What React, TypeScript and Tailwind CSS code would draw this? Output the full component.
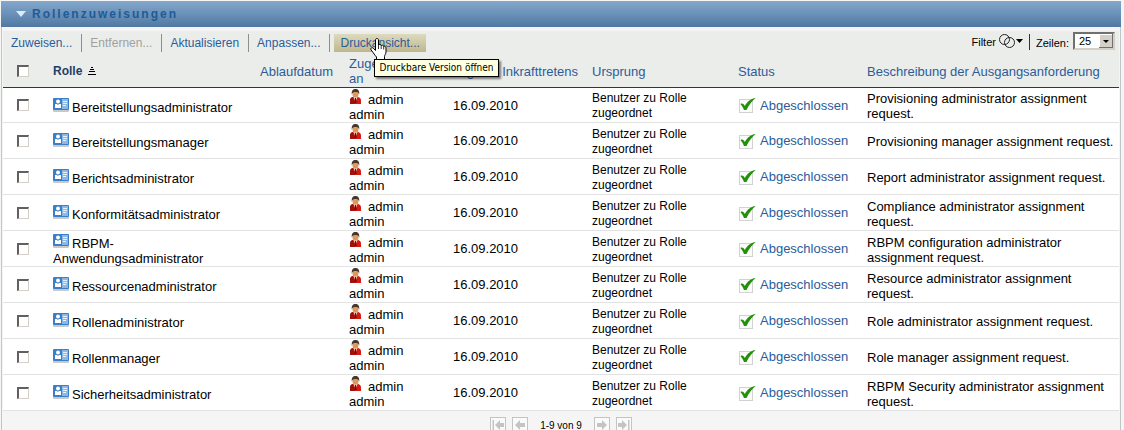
import { useState } from 'react'

const roles = [
  { name: 'Bereitstellungsadministrator', description: 'Provisioning administrator assignment request.' },
  { name: 'Bereitstellungsmanager', description: 'Provisioning manager assignment request.' },
  { name: 'Berichtsadministrator', description: 'Report administrator assignment request.' },
  { name: 'Konformitätsadministrator', description: 'Compliance administrator assignment request.' },
  { name: 'RBPM-Anwendungsadministrator', description: 'RBPM configuration administrator assignment request.' },
  { name: 'Ressourcenadministrator', description: 'Resource administrator assignment request.' },
  { name: 'Rollenadministrator', description: 'Role administrator assignment request.' },
  { name: 'Rollenmanager', description: 'Role manager assignment request.' },
  { name: 'Sicherheitsadministrator', description: 'RBPM Security administrator assignment request.' },
]

function RoleIcon() {
  return (
    <svg className="mr-[3px] inline-block h-3.5 w-4 align-baseline" viewBox="0 0 16 14" aria-hidden="true">
      <rect y="1" width="16" height="13" rx="1" fill="#c9c9c9" />
      <rect width="16" height="12" rx="1" fill="#3b7fc9" />
      <rect x="9" y="1" width="6" height="10" fill="#8db8e4" />
      <circle cx="5" cy="3.500" r="2" fill="#fff" />
      <path d="M2 6h2l1 1 1-1h2v4H2z" fill="#fff" />
      <path d="M10 3.500h4M10 5.500h4M10 7.500h3" stroke="#e8f2fc" />
    </svg>
  )
}

function UserIcon() {
  return (
    <svg className="mr-1.5 inline-block h-[15px] w-[13px] align-baseline" viewBox="0 0 13 15" aria-hidden="true">
      <path d="M1 15v-3.500C1 9.500 2.500 8 4.500 8h4c2 0 3.500 1.500 3.500 3.500V15z" fill="#d41a12" />
      <path d="M1 15v-3.500C1 9.500 2.500 8 4 8l2 7z" fill="#9c120c" />
      <path d="M4.500 8h4l-2 5z" fill="#fbe9e2" />
      <path d="M6 9h1l.5 5h-2z" fill="#6d0805" />
      <ellipse cx="6.500" cy="5.500" rx="3" ry="3.300" fill="#dd9a5e" />
      <path d="M2.800 5.500C2.300 1.800 4 0 6.500 0s4.200 1.800 3.700 5.500C9.500 3.300 8.500 3 6.500 3s-3 .3-3.700 2.500z" fill="#47352a" />
    </svg>
  )
}

function CheckIcon() {
  return (
    <svg className="h-4 w-[18px] shrink-0" viewBox="0 0 18 16" aria-hidden="true">
      <rect x="1.500" y="2.500" width="13" height="13" fill="#fbfbfb" stroke="#d2d2d2" />
      <path d="M2.500 7c2-1 3.300 0 4.300 2C9 5 12.500 1.500 17.500 1 13.500 4.500 10.500 8.500 8.500 13H6C5 10.500 4 9 2.500 7z" fill="#23900a" />
    </svg>
  )
}

function FilterIcon() {
  return (
    <svg className="h-4 w-6" viewBox="0 0 24 16" fill="none" aria-hidden="true">
      <circle cx="5.500" cy="5.500" r="5" stroke="#222" />
      <circle cx="10.500" cy="8.500" r="5" stroke="#222" />
      <path d="M17 5h7l-3.500 4z" fill="#000" />
    </svg>
  )
}

function Checkbox({ label }: { label: string }) {
  return (
    <input
      type="checkbox"
      aria-label={label}
      className="ml-3.5 block size-3 appearance-none border border-t-2 border-l-2 border-t-[#606060] border-r-[#d4d0c8] border-b-[#d4d0c8] border-l-[#606060] bg-white checked:bg-[#2b5c9a]"
    />
  )
}

function PagerButton({ label, back, edge }: { label: string; back?: boolean; edge?: boolean }) {
  return (
    <button type="button" aria-label={label} className="block">
      <svg className={back ? 'size-4 -scale-x-100' : 'size-4'} viewBox="0 0 16 16" aria-hidden="true">
        <rect x=".5" y=".5" width="15" height="15" fill="#fafafa" stroke="#c4c4c4" />
        <path d={edge ? 'M2 6h4V3l5 5-5 5v-3H2z' : 'M3 6h5V3l5 5-5 5v-3H3z'} fill="#c4c4c4" />
        {edge && <path d="M12 3h1.500v10H12z" fill="#c4c4c4" />}
      </svg>
    </button>
  )
}

const toolClass = 'h-[18px] border-r border-[#8e8e8e] pr-[9px] mr-2'
const headClass = 'font-normal text-left align-middle'

export default function App() {
  const [rows, setRows] = useState('25')

  return (
    <div className="bg-[#f5f5f5] pt-px pr-[3px] pl-px font-['Liberation_Sans',Arial,sans-serif] text-[13px] leading-[15px] text-black">
      {/* Title bar */}
      <header className="flex h-[26px] items-center gap-1.5 bg-linear-to-b from-[#84a8cc] to-[#5079a3] pl-[15px]">
        <svg className="h-1.5 w-2.5" viewBox="0 0 10 6" aria-hidden="true">
          <path d="M0 0h10L5 6z" fill="#d8ecfb" />
        </svg>
        <h1 className="text-xs font-bold tracking-[2px] text-[#1f5a99]">Rollenzuweisungen</h1>
      </header>

      <main className="border-x border-[#c3c6c9] px-px pt-1">
        {/* Toolbar */}
        <div className="flex h-6 items-center justify-between bg-[#ebedeb] pr-1 pl-2">
          <div className="flex items-center text-xs leading-[18px] text-[#2b5c9a]">
            <button type="button" className={toolClass}>Zuweisen...</button>
            <button type="button" disabled className={`${toolClass} text-[#a0a0a0]`}>Entfernen...</button>
            <button type="button" className={toolClass}>Aktualisieren</button>
            <button type="button" className="mr-1 h-[18px] border-r border-[#8e8e8e] pr-[9px]">Anpassen...</button>
            <div className="relative">
              <button
                type="button"
                aria-describedby="print-tip"
                className="block h-[18px] bg-linear-to-b from-[#dedabf] to-[#bfb68c] px-1.5"
              >
                Druckansicht...
              </button>
              <span
                id="print-tip"
                role="tooltip"
                className="absolute top-[25px] left-10 z-10 border border-black bg-[#ffffe1] px-1 font-['DejaVu_Sans_Condensed',Tahoma,sans-serif] text-[10px] leading-4 whitespace-nowrap text-black shadow-[2px_2px_2px_rgba(0,0,0,0.5)]"
              >
                Druckbare Version öffnen
              </span>
              <svg className="absolute top-1 left-9 z-20 h-[22px] w-[17px]" viewBox="0 0 17 22" aria-hidden="true">
                <path
                  d="M5.500 2c0-2 3-2 3 0v5c.5-1 2.500-.8 2.700.6.600-.8 2.300-.5 2.500.9.800-.7 2.300-.2 2.300 1.300V14c0 2-1.500 3-1.500 4.500v3H6.500V19C5 17.500 3.500 15 1 11.800.2 10 2 9 3.300 10.200L5.500 12.500z"
                  fill="#fff"
                  stroke="#000"
                />
                <path d="M8.500 7v4M11.200 7.500V11M13.700 8.500v3" stroke="#000" strokeWidth=".8" />
              </svg>
            </div>
          </div>
          <div className="flex items-end self-start pt-px text-[11px]">
            <button type="button" className="mr-1.5 flex items-end gap-[3px]">
              Filter
              <FilterIcon />
            </button>
            <label htmlFor="rows" className="border-l border-[#333] pt-0.5 pr-1 pl-1.5 leading-[14px]">Zeilen:</label>
            <div className="relative">
              <select
                id="rows"
                value={rows}
                onChange={(e) => setRows(e.target.value)}
                className="block h-[18px] w-[42px] appearance-none border-2 border-t-[#707070] border-r-[#d4d0c8] border-b-[#d4d0c8] border-l-[#707070] bg-white pl-1 text-[11px] leading-[14px]"
              >
                <option>10</option>
                <option>25</option>
                <option>50</option>
              </select>
              <svg className="pointer-events-none absolute top-0.5 right-0.5 h-3.5 w-3.5" viewBox="0 0 14 14" aria-hidden="true">
                <path d="M0 0h14v14H0z" fill="#707070" />
                <path d="M0 0h13v13H0z" fill="#fff" />
                <path d="M1 1h12v12H1z" fill="#d4d0c8" />
                <path d="M4 6h6L7 9z" fill="#000" />
              </svg>
            </div>
          </div>
        </div>

        <table className="w-full table-fixed border-separate border-spacing-0">
          <colgroup>
            <col className="w-[50px]" />
            <col className="w-[207px]" />
            <col className="w-[89px]" />
            <col className="w-[104px]" />
            <col className="w-[139px]" />
            <col className="w-[146px]" />
            <col className="w-[129px]" />
            <col />
          </colgroup>
          <thead className="bg-[#ebedeb] text-[#2b5c9a] [&_th]:border-b [&_th]:border-[#1f3864]">
            <tr className="h-[33px]">
              <th scope="col" className={headClass}>
                <Checkbox label="Alle auswählen" />
              </th>
              <th scope="col" aria-sort="ascending" className="text-left align-middle text-xs font-bold text-[#1f3f66]">
                <span className="flex items-center gap-1.5">
                  Rolle
                  <svg className="h-2 w-2" viewBox="0 0 8 8" aria-hidden="true">
                    <path d="M3 .5h2M2 2.500h4M1 4.500h6M0 7.500h8" stroke="#000" />
                  </svg>
                </span>
              </th>
              <th scope="col" className={headClass}>Ablaufdatum</th>
              <th scope="col" className={headClass}>Zugewiesen<br />an</th>
              <th scope="col" className={headClass}>Tag des Inkrafttretens</th>
              <th scope="col" className={headClass}>Ursprung</th>
              <th scope="col" className={headClass}>Status</th>
              <th scope="col" className={headClass}>Beschreibung der Ausgangsanforderung</th>
            </tr>
          </thead>
          <tbody className="bg-white [&_td]:border-b [&_td]:border-[#e2e2e2]">
            {roles.map((role) => (
              <tr key={role.name} className="h-9 first:h-[35px]">
                <td>
                  <Checkbox label={role.name} />
                </td>
                <td className="pt-0.5 pr-4">
                  <RoleIcon />
                  {role.name}
                </td>
                <td />
                <td>
                  <UserIcon />
                  admin
                  <br />
                  admin
                </td>
                <td>16.09.2010</td>
                <td className="pt-0.5 pr-8 text-xs leading-[15px]">Benutzer zu Rolle zugeordnet</td>
                <td>
                  <a href="#status" className="flex items-center gap-1 text-[#2b5c9a]">
                    <CheckIcon />
                    Abgeschlossen
                  </a>
                </td>
                <td className="pt-0.5">{role.description}</td>
              </tr>
            ))}
          </tbody>
        </table>

        {/* Pager */}
        <nav aria-label="Seiten" className="flex items-center justify-center gap-1.5 pt-1.5 text-[10px]">
          <PagerButton label="Erste Seite" back edge />
          <PagerButton label="Vorherige Seite" back />
          <span className="px-1.5">1-9 von 9</span>
          <PagerButton label="Nächste Seite" />
          <PagerButton label="Letzte Seite" edge />
        </nav>
      </main>
    </div>
  )
}
